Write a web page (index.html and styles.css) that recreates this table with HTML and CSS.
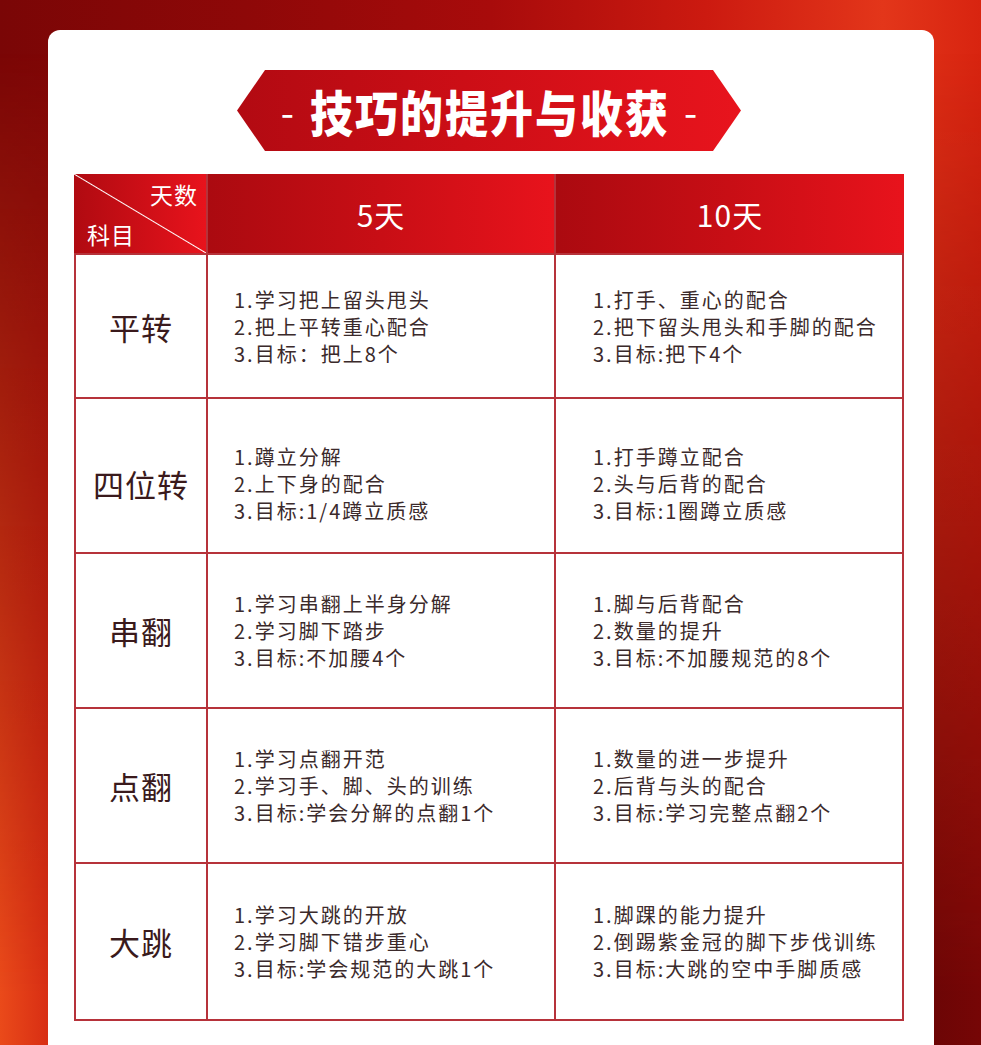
FILE: index.html
```html
<!DOCTYPE html>
<html lang="zh-CN">
<head>
<meta charset="utf-8">
<title>技巧的提升与收获</title>
<link rel="stylesheet" href="styles.css">
</head>
<body>
<div class="card">
  <h1 class="banner"><span class="dash">-</span><span class="title">技巧的提升与收获</span><span class="dash">-</span></h1>
  <div class="grid">
    <div class="hcell corner">
      <span class="days">天数</span>
      <span class="subj">科目</span>
    </div>
    <div class="hcell">5天</div>
    <div class="hcell">10天</div>

    <div class="name">平转</div>
    <div class="cell c2">1.学习把上留头甩头<br>2.把上平转重心配合<br>3.目标：把上8个</div>
    <div class="cell c3">1.打手、重心的配合<br>2.把下留头甩头和手脚的配合<br>3.目标:把下4个</div>

    <div class="name low">四位转</div>
    <div class="cell c2 low">1.蹲立分解<br>2.上下身的配合<br>3.目标:1/4蹲立质感</div>
    <div class="cell c3 low">1.打手蹲立配合<br>2.头与后背的配合<br>3.目标:1圈蹲立质感</div>

    <div class="name">串翻</div>
    <div class="cell c2">1.学习串翻上半身分解<br>2.学习脚下踏步<br>3.目标:不加腰4个</div>
    <div class="cell c3">1.脚与后背配合<br>2.数量的提升<br>3.目标:不加腰规范的8个</div>

    <div class="name">点翻</div>
    <div class="cell c2">1.学习点翻开范<br>2.学习手、脚、头的训练<br>3.目标:学会分解的点翻1个</div>
    <div class="cell c3">1.数量的进一步提升<br>2.后背与头的配合<br>3.目标:学习完整点翻2个</div>

    <div class="name">大跳</div>
    <div class="cell c2">1.学习大跳的开放<br>2.学习脚下错步重心<br>3.目标:学会规范的大跳1个</div>
    <div class="cell c3">1.脚踝的能力提升<br>2.倒踢紫金冠的脚下步伐训练<br>3.目标:大跳的空中手脚质感</div>
  </div>
</div>
</body>
</html>
```
FILE: styles.css
```css
html {
  background: linear-gradient(to right, #7a0606 0%, #8e0808 25%, #a80b0b 50%, #cc1a10 72%, #e3361a 90%, #d82410 100%);
  min-height: 100%;
}
body {
  margin: 0;
  padding: 30px 47px 0 48px;
  font-family: "Noto Sans CJK SC", "Noto Sans", sans-serif;
  min-height: 1045px;
  box-sizing: border-box;
  overflow: hidden;
}
body::before {
  content: "";
  position: fixed;
  inset: 0;
  z-index: -1;
  background: linear-gradient(to right, #ea4a1a 0%, #d42812 6%, #b01010 40%, #880808 80%, #6a0505 94%, #760606 100%);
  -webkit-mask-image: linear-gradient(to bottom, transparent 5%, #000 95%);
  mask-image: linear-gradient(to bottom, transparent 5%, #000 95%);
}
.card {
  background: #fff;
  border-radius: 12px 12px 0 0;
  padding: 40px 30px 60px 26px;
  min-height: 1040px;
  box-sizing: border-box;
}
.banner {
  margin: 0 auto 23px;
  width: 504px;
  height: 81px;
  display: flex;
  align-items: center;
  justify-content: center;
  background: linear-gradient(to right, #b20a12 0%, #cc0e16 45%, #e8141d 100%);
  clip-path: polygon(0 50%, 28px 0, calc(100% - 28px) 0, 100% 50%, calc(100% - 28px) 100%, 28px 100%);
  color: #fff;
  line-height: 1;
  font-weight: 700;
}
.banner .title {
  font-size: 43px;
  font-weight: 900;
  letter-spacing: 2px;
  margin: 0 14px 0 16px;
  transform: scaleY(1.14);
}
.banner .dash {
  font-weight: 400;
  font-size: 38px;
}
.grid {
  display: grid;
  grid-template-columns: 130px 346px 346px;
  grid-template-rows: 79px 142px 153px 153px 153px 155px;
  gap: 2px;
  background: #b6323a;
  border: 2px solid #b6323a;
  border-top: 0;
  width: 830px;
  box-sizing: border-box;
}
.hcell {
  background: linear-gradient(to right, #ab0a10 0%, #c80e15 50%, #e8131c 100%);
  color: #fff;
  font-size: 30px;
  letter-spacing: 1px;
  display: flex;
  align-items: center;
  justify-content: center;
}
.grid > .hcell:first-child { margin-left: -2px; }
.grid > .hcell:nth-child(3) { margin-right: -2px; }
.corner {
  flex-direction: column;
  align-items: stretch;
  justify-content: space-between;
  padding: 6px 8px 5px 13px;
  font-size: 23px;
  letter-spacing: 1px;
  line-height: 28px;
  background:
    linear-gradient(to top right, transparent calc(50% - 1px), #fff 50%, transparent calc(50% + 1px)),
    linear-gradient(to right, #b00a11 0%, #e8131c 100%);
}
.corner .days { align-self: flex-end; }
.corner .subj { align-self: flex-start; }
.name {
  background: #fff;
  display: flex;
  align-items: center;
  justify-content: center;
  font-size: 31px;
  letter-spacing: 1px;
  color: #3a1a1c;
}
.cell {
  background: #fff;
  display: flex;
  align-items: center;
  font-size: 20px;
  letter-spacing: 2px;
  line-height: 27px;
  color: #3b2a2b;
}
.c2 { padding-left: 26px; }
.c3 { padding-left: 37px; }
.low { padding-top: 16px; }
```
